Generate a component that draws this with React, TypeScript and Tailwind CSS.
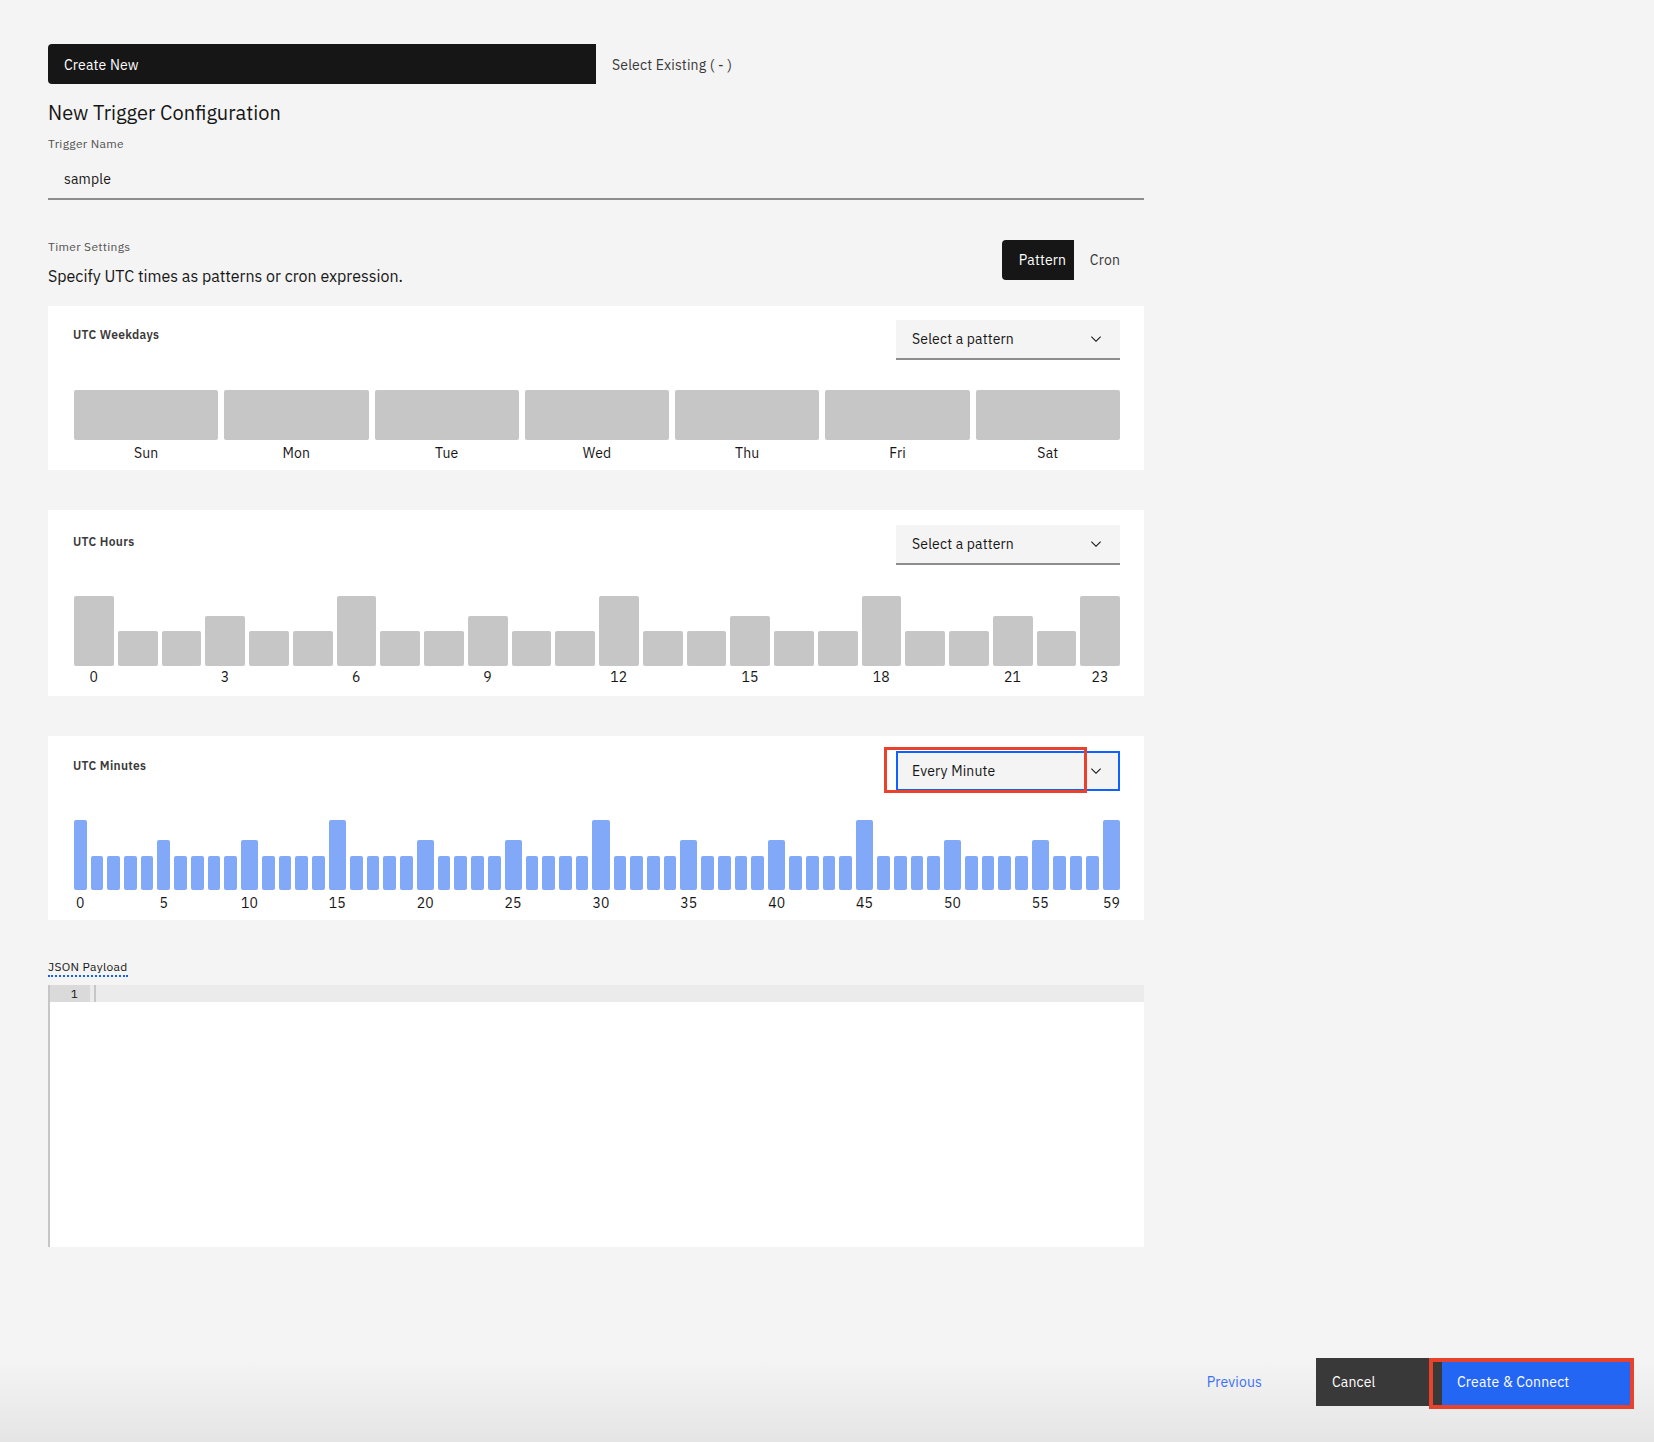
import React from "react";

const hours = Array.from({ length: 24 }, (_, i) => i);
const minutes = Array.from({ length: 60 }, (_, i) => i);
const hourLabels = [0, 3, 6, 9, 12, 15, 18, 21, 23];
const weekdays = ["Sun", "Mon", "Tue", "Wed", "Thu", "Fri", "Sat"];

function hourHeight(h: number) {
  if (h % 6 === 0 || h === 23) return "h-[70px]";
  if (h % 3 === 0) return "h-[50px]";
  return "h-[35px]";
}

function minuteHeight(m: number) {
  if (m % 15 === 0 || m === 59) return "h-[70px]";
  if (m % 5 === 0) return "h-[50px]";
  return "h-[34px]";
}

function Chevron() {
  return (
    <svg width="16" height="16" viewBox="0 0 16 16" className="shrink-0 text-[#161616]">
      <path d="M8 11 3 6l.7-.7L8 9.6l4.3-4.3.7.7z" fill="currentColor" />
    </svg>
  );
}

function Dropdown({ value, focused }: { value: string; focused?: boolean }) {
  if (focused) {
    return (
      <div className="relative w-[224px]">
        <div className="flex h-[40px] items-center justify-between border-2 border-[#0f62fe] bg-[#f4f4f4] pr-[14px] pl-[14px] text-sm tracking-[0.16px] text-[#161616]">
          <span>{value}</span>
          <Chevron />
        </div>
        {/* red annotation frame */}
        <div className="pointer-events-none absolute -top-[4px] -left-[12px] h-[46px] w-[203px] border-[3px] border-[#e8412c]" />
      </div>
    );
  }
  return (
    <div className="flex h-[40px] w-[224px] items-center justify-between border-b-2 border-[#8d8d8d] bg-[#f4f4f4] pr-4 pl-4 text-sm tracking-[0.16px] text-[#161616]">
      <span>{value}</span>
      <Chevron />
    </div>
  );
}

export default function App() {
  return (
    <div
      className="flex h-[1442px] w-[1654px] flex-col bg-[linear-gradient(to_bottom,#f4f4f4_1360px,#e5e5e5_1442px)] text-[#161616]"
      style={{ fontFamily: '"IBM Plex Sans", "Noto Sans", "Liberation Sans", sans-serif' }}
    >
      <main className="w-[1144px] pt-[44px] pl-12">
        {/* tabs */}
        <div className="flex h-10">
          <button className="flex w-[548px] items-center rounded-l-[4px] bg-[#161616] px-4 pt-[2px] text-left text-sm tracking-[0.16px] text-white">
            Create New
          </button>
          <button className="flex items-center px-4 pt-[2px] text-sm tracking-[0.16px] text-[#393939]">
            Select Existing ( - )
          </button>
        </div>

        <h2 className="mt-[15px] text-xl leading-7 text-[#161616]">New Trigger Configuration</h2>

        <label className="mt-[9px] block text-xs leading-4 tracking-[0.32px] text-[#525252]">Trigger Name</label>
        <div className="mt-[8px] flex h-10 items-center border-b-2 border-[#8d8d8d] px-4 text-sm tracking-[0.16px] text-[#161616]">
          sample
        </div>

        <div className="mt-[39px] flex items-start justify-between">
          <div>
            <p className="text-xs leading-4 tracking-[0.32px] text-[#525252]">Timer Settings</p>
            <p className="mt-[9px] text-base leading-6 text-[#161616]">Specify UTC times as patterns or cron expression.</p>
          </div>
          <div className="mt-[1px] mr-2 flex h-10">
            <button className="flex w-[72px] items-center rounded-l-[4px] bg-[#161616] pl-[17px] text-sm tracking-[0.16px] text-white">
              Pattern
            </button>
            <button className="flex items-center px-4 text-sm tracking-[0.16px] text-[#393939]">Cron</button>
          </div>
        </div>

        <div className="mt-[18px] flex flex-col gap-10">
          {/* weekdays */}
          <section className="bg-white pt-[14px] pr-6 pb-[7px] pl-[26px]">
            <div className="flex items-start justify-between">
              <h3 className="mt-[7px] -ml-px text-xs leading-4 font-semibold tracking-[0.32px] text-[#393939]">
                UTC Weekdays
              </h3>
              <Dropdown value="Select a pattern" />
            </div>
            <div className="mt-[30px] grid grid-cols-7 gap-[6px]">
              {weekdays.map((d) => (
                <div key={d} className="flex flex-col items-center">
                  <div className="h-[50px] w-full rounded-[2px] bg-[#c6c6c6]" />
                  <span className="mt-[3px] text-sm leading-5 tracking-[0.16px] text-[#161616]">{d}</span>
                </div>
              ))}
            </div>
          </section>

          {/* hours */}
          <section className="bg-white pt-[15px] pr-6 pb-[9px] pl-[26px]">
            <div className="flex items-start justify-between">
              <h3 className="mt-[9px] -ml-px text-xs leading-4 font-semibold tracking-[0.32px] text-[#393939]">
                UTC Hours
              </h3>
              <Dropdown value="Select a pattern" />
            </div>
            <div className="mt-[31px] flex gap-[4px]">
              {hours.map((h) => (
                <div key={h} className="flex flex-1 flex-col items-center">
                  <div className="flex h-[70px] w-full items-end">
                    <div className={`${hourHeight(h)} w-full rounded-[2px] bg-[#c6c6c6]`} />
                  </div>
                  <span className="mt-[1px] h-5 text-sm leading-5 tracking-[0.16px] text-[#161616]">
                    {hourLabels.includes(h) ? h : ""}
                  </span>
                </div>
              ))}
            </div>
          </section>

          {/* minutes */}
          <section className="bg-white pt-[15px] pr-6 pb-[7px] pl-[26px]">
            <div className="flex items-start justify-between">
              <h3 className="mt-[7px] -ml-px text-xs leading-4 font-semibold tracking-[0.32px] text-[#393939]">
                UTC Minutes
              </h3>
              <Dropdown value="Every Minute" focused />
            </div>
            <div className="mt-[29px] flex gap-[4px]">
              {minutes.map((m) => (
                <div key={m} className="flex flex-1 flex-col items-center">
                  <div className="flex h-[70px] w-full items-end">
                    <div className={`${minuteHeight(m)} w-full rounded-[2px] bg-[#82a9f8]`} />
                  </div>
                  <span className="mt-[3px] h-5 text-sm leading-5 tracking-[0.16px] whitespace-nowrap text-[#161616]">
                    {m % 5 === 0 || m === 59 ? m : ""}
                  </span>
                </div>
              ))}
            </div>
          </section>
        </div>

        <label className="mt-[39px] inline-block border-b-2 border-dotted border-[#0f62fe] text-xs leading-4 tracking-[0.32px] text-[#161616]">
          JSON Payload
        </label>
        <div className="mt-[8px] h-[262px] border-l-2 border-[#c6c6c6] bg-white">
          <div className="flex h-[17px] bg-[#ebebeb] text-xs leading-[17px]">
            <div className="w-[40px] bg-[#dadada] pr-3 text-right text-[#161616]">1</div>
            <div className="ml-[4px] w-[2px] bg-[#c6c6c6]" />
          </div>
        </div>
      </main>

      <footer className="mt-auto flex justify-end pr-[22px] pb-[36px]">
        <button className="flex h-12 items-center pr-[54px] text-sm tracking-[0.16px] text-[#3d70f5]">Previous</button>
        <button className="flex h-12 w-[126px] items-center bg-[#393939] px-4 text-sm tracking-[0.16px] text-white">
          Cancel
        </button>
        <div className="relative">
          <button className="flex h-12 w-[190px] items-center bg-[#2466f4] pl-[15px] text-sm tracking-[0.16px] text-white">
            Create &amp; Connect
          </button>
          <div className="pointer-events-none absolute top-0 -left-[13px] h-[51px] w-[205px] border-4 border-[#e8412c]" />
        </div>
      </footer>
    </div>
  );
}
